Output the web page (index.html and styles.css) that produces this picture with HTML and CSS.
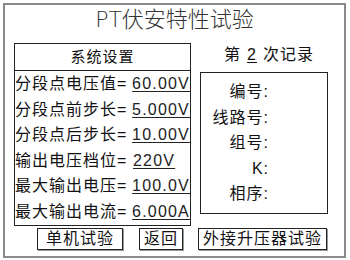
FILE: index.html
```html
<!DOCTYPE html>
<html lang="zh">
<head>
<meta charset="utf-8">
<link rel="stylesheet" href="styles.css">
</head>
<body>
<div class="frame">
  <div class="title">PT伏安特性试验</div>
  <div class="main">
    <div class="settings">
      <div class="settings-head">系统设置</div>
      <div class="row"><span class="lbl">分段点电压值=</span><span class="val">60.00V</span></div>
      <div class="row"><span class="lbl">分段点前步长=</span><span class="val">5.000V</span></div>
      <div class="row"><span class="lbl">分段点后步长=</span><span class="val">10.00V</span></div>
      <div class="row"><span class="lbl">输出电压档位=</span><span class="val">220V</span></div>
      <div class="row"><span class="lbl">最大输出电压=</span><span class="val">100.0V</span></div>
      <div class="row"><span class="lbl">最大输出电流=</span><span class="val">6.000A</span></div>
    </div>
    <div class="record">
      <div class="record-head">第<span class="num">2</span>次记录</div>
      <div class="record-box">
        <div class="rrow"><span class="rlbl">编号:</span></div>
        <div class="rrow"><span class="rlbl">线路号:</span></div>
        <div class="rrow"><span class="rlbl">组号:</span></div>
        <div class="rrow"><span class="rlbl">K:</span></div>
        <div class="rrow"><span class="rlbl">相序:</span></div>
      </div>
    </div>
  </div>
  <div class="buttons">
    <div class="btn btn-single">单机试验</div>
    <div class="btn btn-back">返回</div>
    <div class="btn btn-ext">外接升压器试验</div>
  </div>
</div>
</body>
</html>
```
FILE: styles.css
```css
* { box-sizing: border-box; }
html, body { margin: 0; padding: 0; background: #fff; }
body {
  font-family: "Liberation Sans", "Noto Sans CJK SC", sans-serif;
  color: #111;
  font-size: 16px;
}
.frame {
  margin: 3px 0 0 3px;
  width: 343px;
  height: 255px;
  border: 2px solid #8a8a8a;
}
.title {
  height: 38px;
  padding-top: 3px;
  line-height: 24px;
  font-family: "DejaVu Sans", "Noto Sans CJK SC", sans-serif;
  font-size: 22px;
  font-weight: 200;
  text-align: center;
  color: #333;
}
.main {
  display: flex;
  margin-left: 9px;
  height: 183px;
}
.settings {
  width: 177px;
  height: 183px;
  border: 1px solid #222;
}
.settings-head {
  height: 27px;
  line-height: 26px;
  border-bottom: 1px solid #222;
  text-align: center;
  font-size: 15px;
  letter-spacing: 1px;
}
.row {
  height: 25.5px;
  line-height: 25px;
  display: flex;
  white-space: nowrap;
  letter-spacing: 1px;
}
.lbl { width: 118px; }
.val {
  text-decoration: underline;
  text-underline-offset: 2px;
  letter-spacing: 1.2px;
  color: #222;
}
.record {
  margin-left: 9px;
  width: 128px;
}
.record-head {
  height: 29px;
  line-height: 24px;
  padding-left: 24px;
  letter-spacing: 1px;
}
.num {
  display: inline-block;
  width: 22px;
  text-align: center;
  text-decoration: underline;
  text-underline-offset: 2px;
}
.record-box {
  height: 142px;
  border: 1px solid #222;
  padding-top: 6px;
}
.rrow {
  height: 25.5px;
  line-height: 25px;
}
.rlbl {
  display: block;
  width: 68px;
  text-align: right;
  letter-spacing: 1px;
}
.buttons {
  display: flex;
  margin-top: 2px;
  height: 22px;
}
.btn {
  height: 22px;
  line-height: 20px;
  border: 1px solid #222;
  box-shadow: 1px 1px 0 #999;
  text-align: center;
  letter-spacing: 1px;
}
.btn-single { margin-left: 32px; width: 86px; }
.btn-back { margin-left: 16px; width: 44px; }
.btn-ext { margin-left: 15px; width: 129px; }
```
